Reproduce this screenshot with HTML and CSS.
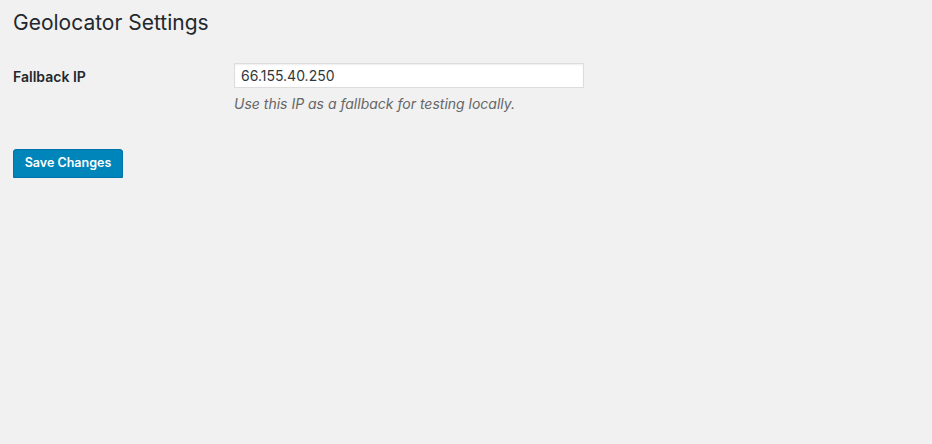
FILE: index.html
```html
<!DOCTYPE html>
<html lang="en">
<head>
<meta charset="utf-8">
<title>Geolocator Settings</title>
<link rel="stylesheet" href="styles.css">
</head>
<body>
<div class="wrap">
  <h1 class="title">Geolocator Settings</h1>
  <form class="settings">
    <div class="row">
      <label class="label" for="fallback-ip">Fallback IP</label>
      <div class="field">
        <input class="text-input" id="fallback-ip" type="text" value="66.155.40.250">
        <p class="description">Use this IP as a fallback for testing locally.</p>
      </div>
    </div>
    <div class="submit">
      <button class="button-primary" type="button">Save Changes</button>
    </div>
  </form>
</div>
</body>
</html>
```

FILE: styles.css
```css
html, body {
  margin: 0;
  padding: 0;
  background: #f1f1f1;
}
body {
  font-family: "Inter", "Liberation Sans", Arial, sans-serif;
  color: #23282d;
  font-size: 13px;
}
.wrap {
  padding: 0 13px;
}
.title {
  margin: 0;
  padding: 9px 0 4px;
  font-size: 21px;
  font-weight: 400;
  line-height: 1.3;
  color: #23282d;
}
.settings {
  margin-top: 20px;
}
.row {
  display: flex;
}
.label {
  width: 221px;
  flex: none;
  font-size: 14px;
  font-weight: 600;
  line-height: 24px;
  padding-top: 5px;
  color: #23282d;
}
.field {
  padding-top: 3px;
}
.text-input {
  display: block;
  box-sizing: border-box;
  width: 350px;
  height: 25px;
  margin: 0;
  padding: 2px 6px;
  border: 1px solid #ddd;
  box-shadow: inset 0 1px 2px rgba(0,0,0,0.07);
  background: #fff;
  font-family: "Inter", "Liberation Sans", Arial, sans-serif;
  font-size: 14px;
  color: #32373c;
  outline: none;
}
.description {
  margin: 5px 0 0;
  font-size: 14px;
  font-style: italic;
  color: #666;
  line-height: 22px;
}
.submit {
  margin-top: 34px;
}
.button-primary {
  box-sizing: border-box;
  height: 29px;
  width: 110px;
  padding: 0 10px 1px;
  background: #0085ba;
  border: 1px solid #0073aa;
  border-radius: 3px;
  box-shadow: 0 1px 0 #006799;
  color: #fff;
  font-family: "Inter", "Liberation Sans", Arial, sans-serif;
  font-size: 12.5px;
  font-weight: 600;
  line-height: 26px;
  cursor: pointer;
}
```
